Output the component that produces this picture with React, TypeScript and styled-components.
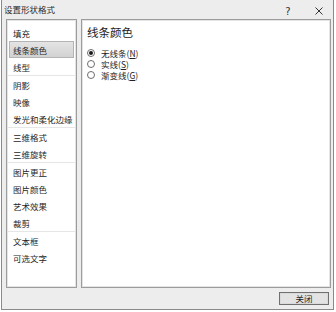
import React from "react";
import styled, { createGlobalStyle } from "styled-components";

const Global = createGlobalStyle`
  html, body { margin: 0; padding: 0; background: #ffffff; }
  body {
    font-family: "Noto Sans CJK SC", "Noto Sans", sans-serif;
    color: #1e1e1e;
  }
`;

const Dialog = styled.div`
  box-sizing: border-box;
  margin-left: 1px;
  width: 333px;
  height: 310px;
  background: #ededed;
  border: 1px solid #8a8a8a;
  border-top: none;
  display: flex;
  flex-direction: column;
`;

const TitleBar = styled.div`
  height: 19px;
  display: flex;
  align-items: center;
  padding: 0 8px 0 2px;
  font-size: 8.5px;
  color: #2a2a2a;
`;

const TitleText = styled.span`
  flex: 1;
  line-height: 19px;
  white-space: nowrap;
`;

const TitleButton = styled.span<{ $gap?: number }>`
  width: 12px;
  margin-right: ${(p) => p.$gap ?? 0}px;
  display: flex;
  justify-content: center;
  align-items: center;
  height: 19px;
  padding-top: 3px;
  box-sizing: border-box;
  font-size: 10px;
  color: #333;
  font-family: "DejaVu Sans", sans-serif;
`;

const Body = styled.div`
  display: flex;
  gap: 4px;
  padding: 0 2px 0 4px;
  height: 269px;
`;

const Panel = styled.div<{ $w: number }>`
  box-sizing: border-box;
  width: ${(p) => p.$w}px;
  height: 100%;
  background: #ffffff;
  border: 1px solid #9c9c9c;
  box-shadow: inset 0 0 0 1px #e4e4e4;
`;

const NavList = styled.div`
  padding: 4px 1px 0 1px;
  display: flex;
  flex-direction: column;
`;

const NavGroup = styled.div<{ $first?: boolean }>`
  display: flex;
  flex-direction: column;
  border-top: ${(p) => (p.$first ? "none" : "1px solid #e6e6e6")};
`;

const NavItem = styled.div<{ $active?: boolean }>`
  box-sizing: border-box;
  height: 17px;
  margin: 0 1px;
  padding-left: 3px;
  display: flex;
  align-items: center;
  white-space: nowrap;
  overflow: hidden;
  font-size: 8.5px;
  color: #262626;
  border: 1px solid ${(p) => (p.$active ? "#b4b4b4" : "transparent")};
  background: ${(p) =>
    p.$active ? "linear-gradient(#e4e4e4, #d2d2d2)" : "transparent"};
`;

const Content = styled.div`
  padding: 3px 0 0 5px;
  display: flex;
  flex-direction: column;
`;

const Heading = styled.div`
  font-size: 11.5px;
  height: 19px;
  line-height: 19px;
  margin-bottom: 5px;
  color: #222;
`;

const RadioRow = styled.label`
  height: 11px;
  display: flex;
  align-items: center;
  gap: 6px;
  font-size: 8.5px;
  color: #222;
`;

const RadioCircle = styled.span<{ $checked?: boolean }>`
  box-sizing: border-box;
  width: 8px;
  height: 8px;
  border-radius: 50%;
  border: 1px solid #6e6e6e;
  background: #fff;
  display: flex;
  align-items: center;
  justify-content: center;
  &::after {
    content: "";
    width: 4px;
    height: 4px;
    border-radius: 50%;
    background: ${(p) => (p.$checked ? "#1a1a1a" : "transparent")};
  }
`;

const Key = styled.span`
  text-decoration: underline;
`;

const Footer = styled.div`
  display: flex;
  justify-content: flex-end;
  padding: 4px 4px 0 0;
`;

const Button = styled.button`
  box-sizing: border-box;
  width: 50px;
  height: 13px;
  padding: 0;
  border: 1px solid #707070;
  box-shadow: inset 0 0 0 1px #dadada;
  background: #e3e3e3;
  font-family: "Noto Sans CJK SC", "Noto Sans", sans-serif;
  font-size: 8.5px;
  line-height: 11px;
  color: #1e1e1e;
`;

const groups: string[][] = [
  ["填充", "线条颜色", "线型"],
  ["阴影", "映像", "发光和柔化边缘"],
  ["三维格式", "三维旋转"],
  ["图片更正", "图片颜色", "艺术效果", "裁剪"],
  ["文本框", "可选文字"],
];

const radios = [
  { label: "无线条", key: "N", checked: true },
  { label: "实线", key: "S", checked: false },
  { label: "渐变线", key: "G", checked: false },
];

export default function App() {
  return (
    <>
      <Global />
      <Dialog>
        <TitleBar>
          <TitleText>设置形状格式</TitleText>
          <TitleButton $gap={19}>?</TitleButton>
          <TitleButton>
            <svg width="8" height="8" viewBox="0 0 8 8">
              <path d="M0.5 0.5 L7.5 7.5 M7.5 0.5 L0.5 7.5" stroke="#333" strokeWidth="1" />
            </svg>
          </TitleButton>
        </TitleBar>
        <Body>
          <Panel $w={71}>
            <NavList>
              {groups.map((g, gi) => (
                <NavGroup key={gi} $first={gi === 0}>
                  {g.map((item) => (
                    <NavItem key={item} $active={item === "线条颜色"}>
                      {item}
                    </NavItem>
                  ))}
                </NavGroup>
              ))}
            </NavList>
          </Panel>
          <Panel $w={250}>
            <Content>
              <Heading>线条颜色</Heading>
              {radios.map((r) => (
                <RadioRow key={r.key}>
                  <RadioCircle $checked={r.checked} />
                  <span>
                    {r.label}(<Key>{r.key}</Key>)
                  </span>
                </RadioRow>
              ))}
            </Content>
          </Panel>
        </Body>
        <Footer>
          <Button>关闭</Button>
        </Footer>
      </Dialog>
    </>
  );
}
